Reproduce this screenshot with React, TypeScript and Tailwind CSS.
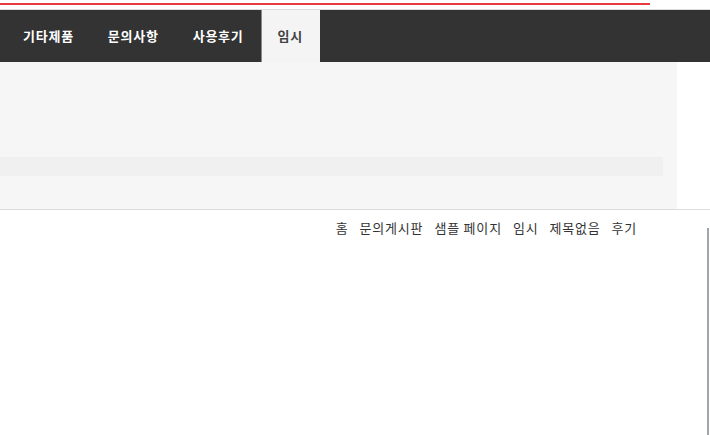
const menu = ["기타제품", "문의사항", "사용후기"];
const crumbs = ["홈", "문의게시판", "샘플 페이지", "임시", "제목없음", "후기"];

export default function App() {
  return (
    <div
      className="relative w-[710px] h-[435px] overflow-hidden bg-white"
      style={{ fontFamily: '"Noto Sans CJK KR", "Noto Sans", sans-serif' }}
    >
      <div className="pt-[3px] h-[9px]">
        <div className="w-[650px] h-[2px] bg-[#e8383f]" />
      </div>
      <div className="h-px bg-[#dcdcdc]" />

      <nav className="flex h-[52px] bg-[#333333] pl-[6px]">
        {menu.map((m) => (
          <a
            key={m}
            className="flex items-center px-[17px] text-[13px] tracking-[0.75px] font-bold text-white"
          >
            {m}
          </a>
        ))}
        <a className="flex items-center pl-[16px] pr-[17px] bg-[#f4f4f4] border-l border-[#8a8a8a] text-[13px] tracking-[0.75px] font-semibold text-[#444]">
          임시
        </a>
      </nav>

      <div className="w-[677px] h-[147px] bg-[#f6f6f6] pt-[95px]">
        <div className="w-[663px] h-[19px] bg-[#f0f0f0]" />
      </div>
      <div className="h-px bg-[#dcdcdc]" />

      <div className="w-[677px] flex justify-end gap-[11px] pr-[40px] pt-[9px] text-[13px] tracking-[0.8px] leading-[18px] text-[#333]">
        {crumbs.map((c) => (
          <span key={c}>{c}</span>
        ))}
      </div>

      <div className="absolute left-[707px] top-[228px] bottom-0 w-[2px] bg-[#a2a6ab]" />
    </div>
  );
}
